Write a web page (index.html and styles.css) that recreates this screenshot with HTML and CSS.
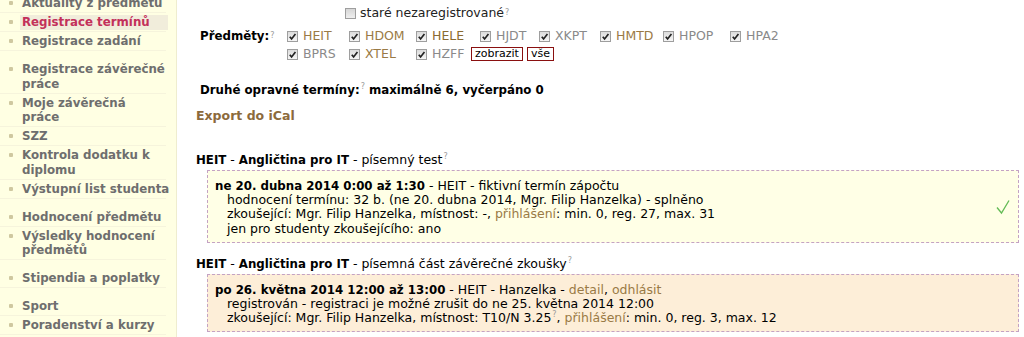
FILE: index.html
```html
<!DOCTYPE html>
<html lang="cs">
<head>
<meta charset="utf-8">
<title>Registrace termínů</title>
<link rel="stylesheet" href="styles.css">
</head>
<body>
<div class="page">
  <nav class="side">
    <ul class="menu">
      <li><span class="bul"></span><span class="lbl">Aktuality z předmětu</span></li>
      <li class="active"><span class="bul"></span><span class="lbl">Registrace termínů</span></li>
      <li><span class="bul"></span><span class="lbl">Registrace zadání</span></li>
    </ul>
    <ul class="menu">
      <li><span class="bul"></span><span class="lbl">Registrace závěrečné<br>práce</span></li>
      <li><span class="bul"></span><span class="lbl">Moje závěrečná<br>práce</span></li>
      <li><span class="bul"></span><span class="lbl">SZZ</span></li>
      <li><span class="bul"></span><span class="lbl">Kontrola dodatku k<br>diplomu</span></li>
      <li><span class="bul"></span><span class="lbl">Výstupní list studenta</span></li>
    </ul>
    <ul class="menu">
      <li><span class="bul"></span><span class="lbl">Hodnocení předmětu</span></li>
      <li><span class="bul"></span><span class="lbl">Výsledky hodnocení<br>předmětů</span></li>
    </ul>
    <ul class="menu">
      <li><span class="bul"></span><span class="lbl">Stipendia a poplatky</span></li>
    </ul>
    <ul class="menu">
      <li><span class="bul"></span><span class="lbl">Sport</span></li>
      <li><span class="bul"></span><span class="lbl">Poradenství a kurzy</span></li>
    </ul>
  </nav>

  <main class="content">
    <div class="stare">
      <span class="cb empty"></span><span class="stare-t">staré nezaregistrované</span><sup class="q">?</sup>
    </div>

    <div class="filter">
      <div class="flabel"><b>Předměty:</b><sup class="q">?</sup></div>
      <div class="subjects">
        <div class="subj"><span class="cb"><svg viewBox="0 0 12 12"><path d="M3 6.2 L5 8.6 L9.2 3.2" /></svg></span><a class="lnk">HEIT</a></div>
        <div class="subj"><span class="cb"><svg viewBox="0 0 12 12"><path d="M3 6.2 L5 8.6 L9.2 3.2" /></svg></span><a class="lnk">HDOM</a></div>
        <div class="subj"><span class="cb"><svg viewBox="0 0 12 12"><path d="M3 6.2 L5 8.6 L9.2 3.2" /></svg></span><a class="lnk dark">HELE</a></div>
        <div class="subj"><span class="cb"><svg viewBox="0 0 12 12"><path d="M3 6.2 L5 8.6 L9.2 3.2" /></svg></span><span class="gray">HJDT</span></div>
        <div class="subj"><span class="cb"><svg viewBox="0 0 12 12"><path d="M3 6.2 L5 8.6 L9.2 3.2" /></svg></span><span class="gray">XKPT</span></div>
        <div class="subj"><span class="cb"><svg viewBox="0 0 12 12"><path d="M3 6.2 L5 8.6 L9.2 3.2" /></svg></span><a class="lnk">HMTD</a></div>
        <div class="subj"><span class="cb"><svg viewBox="0 0 12 12"><path d="M3 6.2 L5 8.6 L9.2 3.2" /></svg></span><span class="gray">HPOP</span></div>
        <div class="subj"><span class="cb"><svg viewBox="0 0 12 12"><path d="M3 6.2 L5 8.6 L9.2 3.2" /></svg></span><span class="gray">HPA2</span></div>
        <div class="subj"><span class="cb"><svg viewBox="0 0 12 12"><path d="M3 6.2 L5 8.6 L9.2 3.2" /></svg></span><span class="gray">BPRS</span></div>
        <div class="subj"><span class="cb"><svg viewBox="0 0 12 12"><path d="M3 6.2 L5 8.6 L9.2 3.2" /></svg></span><a class="lnk">XTEL</a></div>
        <div class="subj"><span class="cb"><svg viewBox="0 0 12 12"><path d="M3 6.2 L5 8.6 L9.2 3.2" /></svg></span><span class="gray">HZFF</span></div>
        <div class="btns"><button class="btn" type="button">zobrazit</button><button class="btn" type="button">vše</button></div>
      </div>
    </div>

    <div class="retake"><b>Druhé opravné termíny:</b><sup class="q">?</sup> <b>maximálně 6, vyčerpáno 0</b></div>

    <div class="export"><a class="lnk">Export do iCal</a></div>

    <h3 class="course"><b>HEIT</b> - <b>Angličtina pro IT</b> - písemný test<sup class="q">?</sup></h3>
    <div class="term t1">
      <div class="term-body">
        <div><b>ne 20. dubna 2014 0:00 až 1:30</b> - HEIT - fiktivní termín zápočtu</div>
        <div class="ind">hodnocení termínu: 32 b. (ne 20. dubna 2014, Mgr. Filip Hanzelka) - splněno</div>
        <div class="ind">zkoušející: Mgr. Filip Hanzelka, místnost: -, <a class="lnk">přihlášení</a>: min. 0, reg. 27, max. 31</div>
        <div class="ind">jen pro studenty zkoušejícího: ano</div>
      </div>
      <svg class="ok" viewBox="0 0 14 16"><path d="M1 8.5 L5.5 14 L13 1.5" /></svg>
    </div>

    <h3 class="course c2"><b>HEIT</b> - <b>Angličtina pro IT</b> - písemná část závěrečné zkoušky<sup class="q">?</sup></h3>
    <div class="term t2">
      <div class="term-body">
        <div><b>po 26. května 2014 12:00 až 13:00</b> - HEIT - Hanzelka - <a class="lnk">detail</a>, <a class="lnk">odhlásit</a></div>
        <div class="ind">registrován - registraci je možné zrušit do ne 25. května 2014 12:00</div>
        <div class="ind">zkoušející: Mgr. Filip Hanzelka, místnost: T10/N 3.25<sup class="q">?</sup>, <a class="lnk">přihlášení</a>: min. 0, reg. 3, max. 12</div>
      </div>
    </div>
  </main>
</div>
</body>
</html>
```

FILE: styles.css
```css
html, body {
  margin: 0;
  padding: 0;
  background: #ffffff;
}
body {
  font-family: "DejaVu Sans", Verdana, sans-serif;
  font-size: 12.5px;
  color: #000;
  overflow: hidden;
  height: 337px;
}
b { font-size: 11.8px; }
.page {
  display: flex;
  align-items: stretch;
  min-height: 337px;
}

/* ---- sidebar ---- */
.side {
  width: 176px;
  flex: none;
  background: #ffffe3;
  border-right: 1px solid #efedcf;
  margin-top: -6px;
  padding-top: 0;
}
.menu {
  list-style: none;
  margin: 0 0 9px 0;
  padding: 0;
}
.menu li {
  display: flex;
  align-items: flex-start;
  padding: 2px 0 1.5px 0;
  line-height: 14.5px;
  font-weight: bold;
  font-size: 11.8px;
  color: #6e6e6e;
  border-bottom: 1px solid #f6f4dc;
  margin-right: 10px;
  white-space: nowrap;
}
.bul {
  width: 4px;
  height: 4px;
  margin: 5px 7px 0 9px;
  background: #cfc8a0;
  border-radius: 1px;
  flex: none;
}
.lbl { padding: 0 2px; }
.menu li.active .lbl {
  color: #c3305a;
  background: #f1eddb;
  padding-right: 18px;
}

/* ---- content ---- */
.content {
  flex: 1;
  padding: 0 5px 0 19px;
  line-height: 14px;
}
.q {
  font-size: 8px;
  font-weight: normal;
  color: #9a9a9a;
  vertical-align: top;
  line-height: 8px;
  margin-left: 1px;
}
.lnk { color: #9a7a45; text-decoration: none; }
.lnk.dark { color: #8a6a30; }
.gray { color: #8a8a8a; }

.stare {
  display: flex;
  align-items: center;
  padding: 6px 0 0 149px;
  height: 14px;
  color: #222;
  font-size: 12.5px;
}
.stare .cb { margin-right: 4px; }

.cb {
  width: 11px;
  height: 11px;
  border: 1px solid #9e9e9e;
  background: linear-gradient(#dcdcdc, #f6f6f6);
  box-sizing: border-box;
  display: inline-flex;
  flex: none;
}
.cb.empty { background: linear-gradient(#d6d6d6, #efefef); }
.cb svg { width: 11px; height: 11px; margin: -1px; }
.cb svg path { fill: none; stroke: #222; stroke-width: 1.8; }

.filter {
  display: flex;
  margin-top: 7px;
  font-size: 12.5px;
}
.flabel {
  width: 87px;
  padding-left: 4px;
  flex: none;
  height: 18px;
  display: flex;
  align-items: center;
}
.subjects {
  display: grid;
  grid-template-columns: 62px 67px 64px 59px 61px 63px 67px 60px;
  grid-auto-rows: 18px;
}
.subj {
  display: flex;
  align-items: center;
  gap: 5px;
}
.btns {
  grid-column: 4 / span 3;
  display: flex;
  align-items: center;
  gap: 4px;
  margin-left: -9px;
}
.btn {
  font-family: "DejaVu Sans", Verdana, sans-serif;
  font-size: 11px;
  line-height: 12px;
  padding: 0 3px;
  margin: 0;
  border: 1px solid #8a1010;
  background: #fff;
  color: #000;
  border-radius: 0;
}

.retake {
  margin-top: 20px;
  padding-left: 4px;
  height: 14px;
}
.export {
  margin-top: 12px;
  font-weight: bold;
}
.export .lnk { color: #8c6a3c; }

.course {
  margin: 30px 0 3px 0;
  font-size: 12.5px;
  font-weight: normal;
  line-height: 14px;
}
.course.c2 { margin-top: 14px; }

.term {
  margin-left: 11px;
  border: 1px dashed #c4a2c4;
  display: flex;
  align-items: center;
}
.term.t1 {
  background: #ffffe6;
  padding: 8px 8px 6px 7px;
}
.term.t2 {
  background: #fdeed8;
  padding: 8px 8px 6px 7px;
}
.term-body { flex: 1; line-height: 14.2px; }
.ind { padding-left: 12px; }
.ok { width: 14px; height: 16px; flex: none; margin-right: 0; }
.ok path { fill: none; stroke: #63bb55; stroke-width: 1.3; }
```
